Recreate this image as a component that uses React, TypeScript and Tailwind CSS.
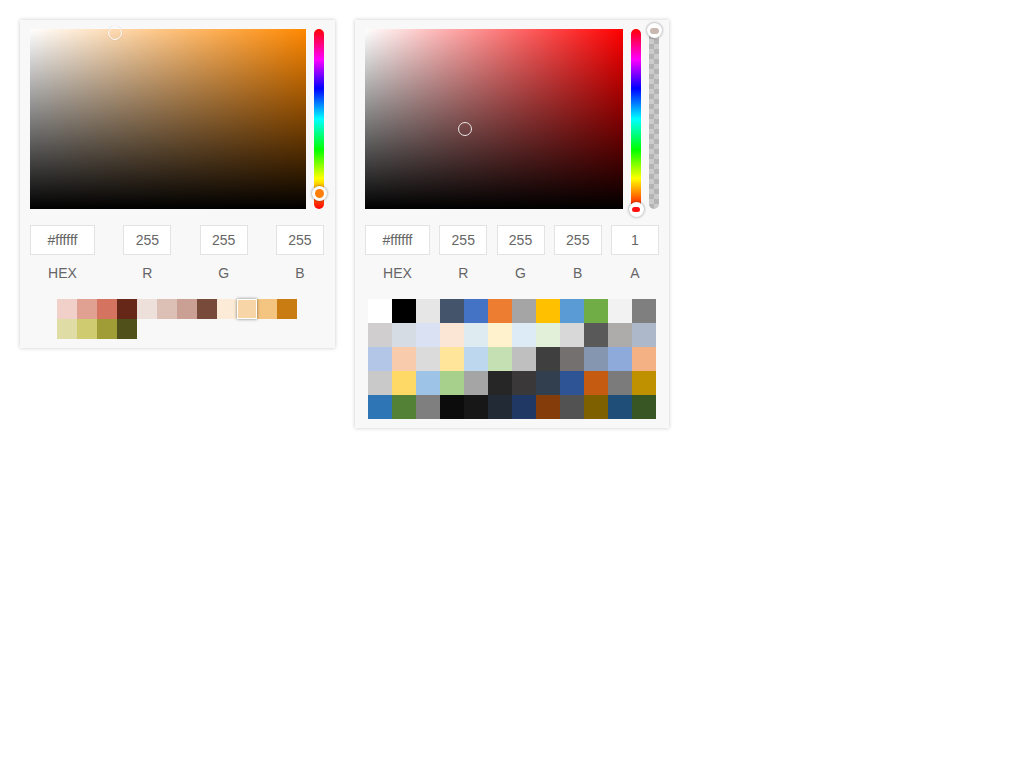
import React from "react";

const warmSwatches = [
  "#f2d0ca", "#e0a092", "#d4735f", "#662719", "#ede0db", "#dcc0b5",
  "#c9a093", "#774a3a", "#fcebd7", "#f8d5a7", "#f4c580", "#c97c12",
  "#e0dca5", "#cfcb71", "#a09c36", "#50501b",
];

const officeSwatches = [
  "#ffffff", "#000000", "#e7e6e6", "#44546a", "#4472c4", "#ed7d31", "#a5a5a5", "#ffc000", "#5b9bd5", "#70ad47", "#f2f2f2", "#7f7f7f",
  "#d0cece", "#d6dce4", "#dae1f3", "#fbe5d5", "#deebf0", "#fff2cc", "#ddebf7", "#e2efd9", "#d8d8d8", "#595959", "#aeabab", "#adb9ca",
  "#b4c6e7", "#f7cbac", "#dbdbdb", "#fee599", "#bdd7ee", "#c5e0b3", "#bfbfbf", "#3f3f3f", "#757070", "#8496b0", "#8eaadb", "#f4b183",
  "#c9c9c9", "#ffd966", "#9dc3e6", "#a8d08d", "#a5a5a5", "#262626", "#3a3838", "#323f4f", "#2f5496", "#c55a11", "#7b7b7b", "#bf9000",
  "#2e75b5", "#538135", "#7f7f7f", "#0c0c0c", "#171717", "#222a35", "#1f3864", "#843c0b", "#525252", "#7f6000", "#1f4e79", "#375623",
];

function Field({ value, label, wide }: { value: string; label: string; wide?: boolean }) {
  return (
    <div className="flex flex-col items-center">
      <div
        className={
          "h-[30px] flex items-center justify-center bg-white border border-[#e3e3e3] text-[14px] text-[#666] " +
          (wide ? "w-[65px]" : "w-[48px]")
        }
      >
        {value}
      </div>
      <div className="mt-[8px] h-[20px] leading-[20px] text-[14px] text-[#666]">{label}</div>
    </div>
  );
}

function HueBar({ children }: { children?: React.ReactNode }) {
  return (
    <div className="relative w-[10px] h-[180px] rounded-full bg-[linear-gradient(to_bottom,#f00_0%,#f0f_17%,#00f_33%,#0ff_50%,#0f0_67%,#ff0_83%,#f00_100%)]">
      {children}
    </div>
  );
}

function Thumb({ className, dot }: { className: string; dot: string }) {
  return (
    <div
      className={
        "absolute w-[15px] h-[15px] rounded-full bg-white shadow-[0_0_3px_rgba(0,0,0,0.45)] flex items-center justify-center " +
        className
      }
    >
      <div className={dot} />
    </div>
  );
}

export default function App() {
  return (
    <div className="flex items-start gap-[20px] p-[20px] font-['Liberation_Sans',Arial,sans-serif]">
      {/* left picker */}
      <div className="w-[315px] bg-[#f8f8f8] shadow-[0_0_4px_rgba(0,0,0,0.22)] pl-[10px] pr-[11px] pt-[9px] pb-[9px]">
        <div className="flex gap-[8px]">
          <div className="relative w-[276px] h-[180px] bg-[#ff8800]">
            <div className="absolute inset-0 bg-[linear-gradient(to_right,#fff,rgba(255,255,255,0))]" />
            <div className="absolute inset-0 bg-[linear-gradient(to_top,#000,rgba(0,0,0,0))]" />
            <div className="absolute left-[78px] top-[-3px] w-[14px] h-[14px] rounded-full border-[1.5px] border-white shadow-[0_0_1px_rgba(0,0,0,0.3)]" />
          </div>
          <HueBar>
            <Thumb className="left-[-2.5px] top-[157px]" dot="w-[9px] h-[9px] rounded-full bg-[#ff7f0a]" />
          </HueBar>
        </div>
        <div className="mt-[16px] flex justify-between">
          <Field value="#ffffff" label="HEX" wide />
          <Field value="255" label="R" />
          <Field value="255" label="G" />
          <Field value="255" label="B" />
        </div>
        <div className="mt-[16px] mx-auto w-[240px] flex flex-wrap">
          {warmSwatches.map((c, i) => (
            <div
              key={i}
              className={
                "w-[20px] h-[20px] " +
                (i === 9 ? "border border-white shadow-[0_0_3px_rgba(0,0,0,0.5)] relative" : "")
              }
              style={{ backgroundColor: c }}
            />
          ))}
        </div>
      </div>

      {/* right picker */}
      <div className="w-[314px] bg-[#f8f8f8] shadow-[0_0_4px_rgba(0,0,0,0.22)] px-[10px] pt-[9px] pb-[9px]">
        <div className="flex gap-[8px]">
          <div className="relative w-[258px] h-[180px] bg-[#ff0000]">
            <div className="absolute inset-0 bg-[linear-gradient(to_right,#fff,rgba(255,255,255,0))]" />
            <div className="absolute inset-0 bg-[linear-gradient(to_top,#000,rgba(0,0,0,0))]" />
            <div className="absolute left-[93px] top-[93px] w-[14px] h-[14px] rounded-full border-[1.5px] border-white/85" />
          </div>
          <HueBar>
            <Thumb className="left-[-2.5px] top-[173px]" dot="w-[8px] h-[5px] rounded-full bg-[#f11]" />
          </HueBar>
          <div className="relative w-[10px] h-[180px] rounded-full bg-[conic-gradient(#b4b4b4_25%,#cbcbcb_0_50%,#b4b4b4_0_75%,#cbcbcb_0)] bg-[length:10px_10px]">
            <Thumb className="left-[-2.5px] top-[-6px]" dot="w-[9px] h-[6px] rounded-full bg-[#c9b8b0]" />
          </div>
        </div>
        <div className="mt-[16px] flex justify-between">
          <Field value="#ffffff" label="HEX" wide />
          <Field value="255" label="R" />
          <Field value="255" label="G" />
          <Field value="255" label="B" />
          <Field value="1" label="A" />
        </div>
        <div className="mt-[16px] mx-auto w-[288px] grid grid-cols-12">
          {officeSwatches.map((c, i) => (
            <div key={i} className="w-[24px] h-[24px]" style={{ backgroundColor: c }} />
          ))}
        </div>
      </div>
    </div>
  );
}
